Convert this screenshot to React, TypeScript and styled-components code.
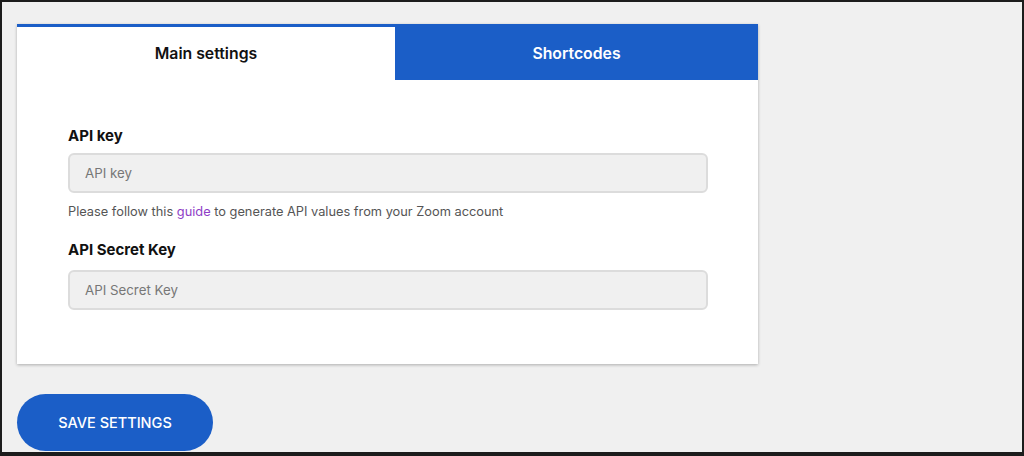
import React from "react";
import styled, { createGlobalStyle } from "styled-components";

const Global = createGlobalStyle`
  html, body { margin: 0; padding: 0; background: #f0f0f0; }
  * { box-sizing: border-box; }
  body { font-family: Inter, "Noto Sans", "Liberation Sans", sans-serif; }
`;

const Frame = styled.div`
  width: 1024px;
  height: 456px;
  border: 2px solid #1c1c1c;
  border-bottom-width: 4px;
  background: #f0f0f0;
  padding: 22px 0 0 15px;
  display: flex;
  flex-direction: column;
  align-items: flex-start;
  overflow: hidden;
`;

const Card = styled.div`
  width: 741px;
  background: #fff;
  box-shadow: 0 1px 3px rgba(0, 0, 0, 0.28);
`;

const Tabs = styled.div`
  display: flex;
  height: 56px;
`;

const Tab = styled.div<{ $active?: boolean; $width?: number }>`
  ${(p) => (p.$width ? `width: ${p.$width}px;` : "flex: 1;")}
  display: flex;
  align-items: center;
  justify-content: center;
  font-size: 15.8px;
  font-weight: 600;
  color: ${(p) => (p.$active ? "#111" : "#fff")};
  background: ${(p) => (p.$active ? "#fff" : "#1b5ec7")};
  border-top: 3px solid #1b5ec7;
`;

const Body = styled.div`
  padding: 46px 50px 54px 51px;
  display: flex;
  flex-direction: column;
`;

const Label = styled.label<{ $top?: number }>`
  font-size: 15px;
  font-weight: 700;
  color: #111;
  line-height: 20px;
  margin-top: ${(p) => p.$top ?? 0}px;
`;

const Input = styled.input<{ $top?: number }>`
  margin-top: ${(p) => p.$top ?? 7}px;
  width: 640px;
  height: 40px;
  border: 2px solid #dcdcdc;
  border-radius: 6px;
  background: #f0f0f0;
  padding: 0 15px;
  font-family: inherit;
  font-size: 13.3px;
  color: #333;
  outline: none;
  &::placeholder { color: #777; }
`;

const Help = styled.p`
  margin: 10px 0 0;
  font-size: 12.8px;
  line-height: 18px;
  color: #555;
`;

const Link = styled.a`
  color: #8e3ec6;
  text-decoration: none;
`;

const SaveButton = styled.button`
  margin-top: 30px;
  width: 196px;
  height: 57px;
  border: none;
  border-radius: 29px;
  background: #1b5ec7;
  color: #fff;
  font-family: inherit;
  font-size: 14.5px;
  font-weight: 500;
  cursor: pointer;
`;

export default function App() {
  return (
    <>
      <Global />
      <Frame>
        <Card>
          <Tabs>
            <Tab $active $width={378}>Main settings</Tab>
            <Tab>Shortcodes</Tab>
          </Tabs>
          <Body>
            <Label>API key</Label>
            <Input placeholder="API key" />
            <Help>
              Please follow this <Link href="#">guide</Link> to generate API values from your Zoom account
            </Help>
            <Label $top={19}>API Secret Key</Label>
            <Input $top={10} placeholder="API Secret Key" />
          </Body>
        </Card>
        <SaveButton>SAVE SETTINGS</SaveButton>
      </Frame>
    </>
  );
}
